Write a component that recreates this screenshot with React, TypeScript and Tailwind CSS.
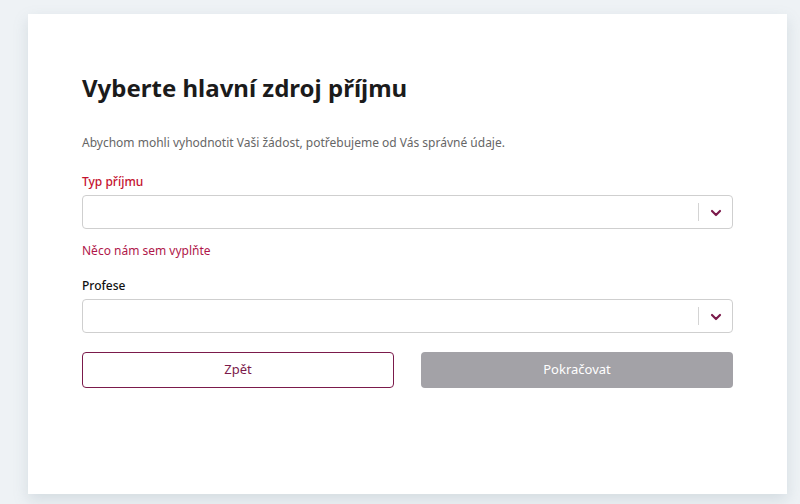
import { ChevronDown } from 'lucide-react'

function Select() {
  return (
    <div className="flex h-[34px] w-full items-center rounded-[4px] border border-[#cfcfcf] bg-white">
      <div className="flex-1" />
      <div className="h-[18px] w-px bg-[#d4d4d4]" />
      <div className="flex w-[33px] items-center justify-center pt-px text-[#7b1a4b]">
        <ChevronDown size={16} strokeWidth={3.2} />
      </div>
    </div>
  )
}

export default function App() {
  return (
    <div
      className="min-h-[504px] bg-[#eef2f5] pt-[14px] pr-[13px] pb-[10px] pl-[28px] text-[#1b1b1b]"
      style={{ fontFamily: '"Noto Sans", "Open Sans", sans-serif' }}
    >
      <div className="h-[480px] bg-white px-[54px] pt-[57px] shadow-[0_6px_14px_rgba(120,140,155,0.22)]">
        <h1 className="text-[24px] leading-[34px] font-bold text-[#1b1b1b]">Vyberte hlavní zdroj příjmu</h1>
        <p className="mt-[29px] text-[12px] leading-[18px] text-[#666]">
          Abychom mohli vyhodnotit Vaši žádost, potřebujeme od Vás správné údaje.
        </p>
        <label className="mt-[21px] block text-[12px] leading-[18px] font-medium text-[#c4122f]">Typ příjmu</label>
        <div className="mt-[4px]">
          <Select />
        </div>
        <p className="mt-[13px] text-[12px] leading-[18px] text-[#b0174a]">Něco nám sem vyplňte</p>
        <label className="mt-[17px] block text-[12px] leading-[18px] font-medium text-[#111]">Profese</label>
        <div className="mt-[4px]">
          <Select />
        </div>
        <div className="mt-[19px] grid grid-cols-2 gap-[27px]">
          <button className="h-[36px] rounded-[4px] border border-[#7b1a4b] bg-white text-[13px] text-[#7b1a4b]">
            Zpět
          </button>
          <button className="h-[36px] rounded-[4px] bg-[#a3a2a7] text-[13px] text-white">Pokračovat</button>
        </div>
      </div>
    </div>
  )
}
